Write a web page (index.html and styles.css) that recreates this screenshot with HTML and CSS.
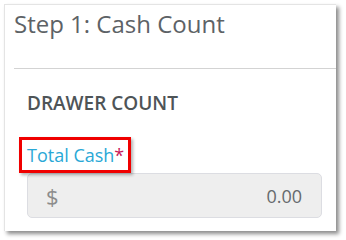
FILE: index.html
```html
<!DOCTYPE html>
<html>
<head>
<meta charset="utf-8">
<link rel="stylesheet" href="styles.css">
</head>
<body>
<div class="panel">
  <div class="panel-head">
    <h1 class="title">Step 1: Cash Count</h1>
  </div>
  <div class="panel-body">
    <h2 class="section">DRAWER COUNT</h2>
    <div class="field">
      <label class="label"><span class="label-text">Total Cash</span><span class="req">*</span></label>
      <div class="input">
        <span class="prefix">$</span>
        <span class="value">0.00</span>
      </div>
    </div>
  </div>
</div>
</body>
</html>
```
FILE: styles.css
```css
html, body {
  margin: 0;
  padding: 0;
  background: #ffffff;
}
body {
  font-family: "Open Sans", "Noto Sans", sans-serif;
  width: 346px;
  height: 240px;
  overflow: hidden;
}
.panel {
  margin: 4px 0 0 4px;
  width: 331px;
  height: 226px;
  background: #ffffff;
  border-top: 1px solid #e4e4e4;
  border-left: 1px solid #e4e4e4;
  box-shadow: 3px 3px 4px rgba(0, 0, 0, 0.45);
  overflow: hidden;
}
.panel-head {
  margin-left: 9px;
  height: 63px;
  border-bottom: 1px solid #d3d3d3;
}
.title {
  margin: 0;
  padding-top: 3px;
  font-size: 24px;
  font-weight: 400;
  line-height: 32px;
  color: #5d6266;
}
.panel-body {
  padding: 22px 15px 0 22px;
}
.section {
  margin: 0;
  font-size: 19px;
  font-weight: 600;
  line-height: 24px;
  color: #4e5457;
}
.field {
  margin-top: 22px;
  margin-left: -8px;
}
.label {
  display: inline-flex;
  align-items: baseline;
  padding: 2px 4px 2px 5px;
  border: 3px solid #f00000;
  box-shadow: 2px 2px 3px rgba(0, 0, 0, 0.3);
  font-size: 18px;
  line-height: 26px;
}
.label-text {
  color: #2aa8d6;
}
.req {
  color: #c8195a;
}
.input {
  margin-left: 8px;
  width: 295px;
  height: 45px;
  box-sizing: border-box;
  background: #eeeeee;
  border: 1px solid #dcdde2;
  border-radius: 5px;
  display: flex;
  align-items: center;
  justify-content: space-between;
  padding: 0 19px 0 18px;
}
.prefix {
  font-size: 22px;
  color: #8c8c8c;
}
.value {
  font-size: 18px;
  color: #666a6d;
}
```
